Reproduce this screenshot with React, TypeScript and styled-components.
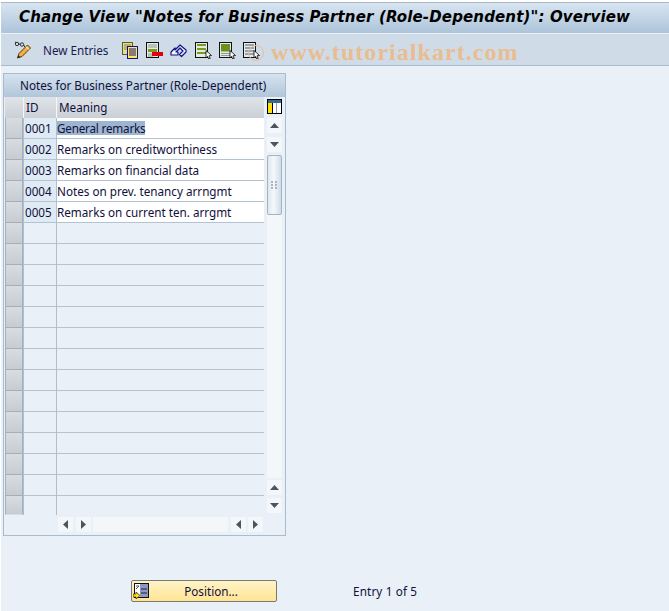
import React from "react";
import styled, { createGlobalStyle } from "styled-components";

const Global = createGlobalStyle`
  html, body { margin: 0; padding: 0; background: #fff; }
  #root { width: 669px; height: 611px; overflow: hidden; }
`;

const Page = styled.div`
  position: relative;
  width: 669px;
  height: 611px;
  box-sizing: border-box;
  padding: 2px 0 0 1px;
  display: flex;
  flex-direction: column;
  background: #fff;
  font-family: "Noto Sans", sans-serif;
  font-size: 11.7px;
  color: #10103a;
`;
const TitleBar = styled.div`
  height: 31px;
  flex: none;
  box-sizing: border-box;
  border-top: 1px solid #a9b9c9;
  padding: 0 0 2px 18px;
  display: flex;
  align-items: center;
  background: linear-gradient(#d8e5f1, #adc4da);
`;
const Title = styled.h1`
  margin: 0;
  font: italic bold 15px "DejaVu Sans", sans-serif;
  letter-spacing: 0.14px;
  color: #000;
  white-space: nowrap;
`;
const Toolbar = styled.div`
  position: relative;
  height: 33px;
  flex: none;
  box-sizing: border-box;
  border-top: 1px solid #e9f0f7;
  border-bottom: 1px solid #a9bacb;
  padding-left: 13px;
  display: flex;
  align-items: center;
  background: #cfdce7;
`;
const ToolIcon = styled.svg<{ $gap?: number }>`
  width: 18px;
  height: 18px;
  flex: none;
  margin-right: ${(p) => p.$gap ?? 6.3}px;
`;
const ToolText = styled.span`
  width: 67px;
  margin: 0 11px 0 11px;
  color: #1a1a50;
  white-space: nowrap;
`;
const Watermark = styled.div`
  position: absolute;
  left: 270px;
  top: 5px;
  font: bold 24px "Liberation Serif", serif;
  letter-spacing: 1.05px;
  color: #e9bd90;
  white-space: nowrap;
`;
const WatermarkRing = styled.div`
  position: absolute;
  left: 247px;
  top: 11px;
  width: 14px;
  height: 14px;
  border: 1px solid #e9bd90;
  border-radius: 50%;
`;
const Main = styled.div`
  flex: 1;
  display: flex;
  flex-direction: column;
  background: #e9f0f7;
  padding: 7px 0 0 2px;
`;
const Panel = styled.section`
  width: 283px;
  height: 463px;
  box-sizing: border-box;
  border: 1px solid #a9bccf;
  display: flex;
  flex-direction: column;
`;
const PanelTitle = styled.div`
  height: 23px;
  flex: none;
  box-sizing: border-box;
  padding: 0 0 0 16px;
  line-height: 23px;
  white-space: nowrap;
  color: #10103a;
  background: linear-gradient(#d6e3ef, #b0c6da);
`;
const TableArea = styled.div`
  display: flex;
  flex: none;
  padding: 0 3px 0 1px;
`;
const Grid = styled.div`
  width: 259px;
  flex: none;
  display: flex;
  flex-direction: column;
`;
const Row = styled.div`
  display: grid;
  grid-template-columns: 18px 1px 32px 1px 207px;
  height: 21px;
  &:last-child {
    height: 19px;
  }
  &:last-child > * {
    border-bottom-color: transparent;
  }
`;
const HeaderRow = styled.div`
  display: grid;
  grid-template-columns: 18px 1px 32px 1px 207px;
  height: 21px;
  background: linear-gradient(#e0e4e8, #c9d0d6);
`;
const HeaderCell = styled.div`
  padding-left: 2px;
  line-height: 21px;
  color: #10103a;
`;
const Selector = styled.div`
  box-sizing: border-box;
  background: linear-gradient(#d8dde2, #c6ccd2);
  border: 1px solid #a5afb9;
  border-width: 0 1px 1px 1px;
`;
const Divider = styled.div`
  background: #aebfce;
`;
const HeaderDivider = styled.div`
  background: #f4f6f8;
`;
const IdCell = styled.div<{ $filled: boolean }>`
  box-sizing: border-box;
  padding-left: 1px;
  display: flex;
  align-items: center;
  background: ${(p) => (p.$filled ? "#dfeaf5" : "transparent")};
  border-bottom: 1px solid #b3c3d2;
  color: #10103a;
`;
const MeaningCell = styled.div<{ $filled: boolean }>`
  box-sizing: border-box;
  display: flex;
  align-items: center;
  background: ${(p) => (p.$filled ? "#fff" : "transparent")};
  border-bottom: 1px solid #b3c3d2;
  color: #10103a;
  white-space: nowrap;
`;
const Selected = styled.span`
  background: #9db5d1;
  height: 14px;
  line-height: 14px;
  letter-spacing: -0.2px;
`;
const RowsBody = styled.div`
  display: flex;
  flex-direction: column;
`;
const VScroll = styled.div`
  width: 15px;
  margin-left: 3px;
  display: flex;
  flex-direction: column;
  align-items: stretch;
`;
const ColumnConfig = styled.svg`
  width: 15px;
  height: 15px;
  margin: 2px 0 4px;
  display: block;
`;
const ScrollButton = styled.button<{ $gap?: number }>`
  width: 15px;
  height: 15px;
  flex: none;
  margin: 0 0 ${(p) => p.$gap ?? 3}px;
  padding: 0;
  border: none;
  background: #f4f7fa;
  display: flex;
  align-items: center;
  justify-content: center;
`;
const HButton = styled(ScrollButton)<{ $right?: number }>`
  margin: 0 ${(p) => p.$right ?? 0}px 0 0;
`;
const Thumb = styled.div`
  width: 15px;
  height: 60px;
  box-sizing: border-box;
  flex: none;
  border: 1px solid #a8b3bd;
  border-radius: 2px;
  background: linear-gradient(90deg, #dfe8f0, #f4f8fb 45%, #cfdce8);
  display: flex;
  align-items: center;
  justify-content: center;
`;
const Track = styled.div`
  width: 15px;
  flex: 1;
  background: #f4f7fa;
  margin-bottom: 2px;
`;
const VTrackBox = styled.div`
  height: 325px;
  display: flex;
  flex-direction: column;
  flex: none;
`;
const HScroll = styled.div`
  display: flex;
  align-items: center;
  height: 15px;
  margin: 2px 0 0 53px;
`;
const HTrack = styled.div`
  width: 135px;
  height: 15px;
  margin-right: 3px;
  background: #f4f7fa;
`;
const Footer = styled.div`
  display: flex;
  align-items: center;
  margin: 44px 0 0 128px;
`;
const PositionButton = styled.button`
  width: 146px;
  height: 22px;
  box-sizing: border-box;
  padding: 0 0 0 1px;
  display: flex;
  align-items: center;
  border: 1px solid #7a7a72;
  border-radius: 2px;
  background: linear-gradient(#fff4c8, #ffe493);
  font: 11.7px "Noto Sans", sans-serif;
  color: #10103a;
`;
const ButtonLabel = styled.span`
  flex: 1;
  text-align: center;
  padding-right: 3px;
`;
const EntryInfo = styled.span`
  margin-left: 76px;
  letter-spacing: 0.15px;
  color: #10103a;
`;

const Up = () => <svg width="9" height="5"><path d="M0 5 L4.5 0 L9 5Z" fill="#4a5560" /></svg>;
const Down = () => <svg width="9" height="5"><path d="M0 0 L4.5 5 L9 0Z" fill="#4a5560" /></svg>;
const Left = () => <svg width="5" height="9"><path d="M5 0 L0 4.5 L5 9Z" fill="#4a5560" /></svg>;
const Right = () => <svg width="5" height="9"><path d="M0 0 L5 4.5 L0 9Z" fill="#4a5560" /></svg>;

const Arrow = () => <path d="M12 9.5 L17.5 14.5 L15 14.8 L16.2 17.5 L14.8 18 L13.6 15.4 L12 17Z" fill="#fff" stroke="#000" strokeWidth="0.8" />;

const Rows = [
  ["0001", "General remarks"],
  ["0002", "Remarks on creditworthiness"],
  ["0003", "Remarks on financial data"],
  ["0004", "Notes on prev. tenancy arrngmt"],
  ["0005", "Remarks on current ten. arrgmt"],
  ...Array.from({ length: 14 }, () => ["", ""]),
];

export default function App() {
  return (
    <Page>
      <Global />
      <TitleBar>
        <Title>Change View "Notes for Business Partner (Role-Dependent)": Overview</Title>
      </TitleBar>
      <Toolbar>
        <ToolIcon viewBox="0 0 18 18" $gap={0}>
          <circle cx="3" cy="3" r="1.7" fill="none" stroke="#333" />
          <circle cx="8" cy="3.5" r="1.7" fill="none" stroke="#333" />
          <path d="M1 1.5 L2 1 M4.6 3 L6.4 3.2 M9.6 4 L11 6" stroke="#222" fill="none" />
          <path d="M13.5 4 L16.5 7 L8 15.5 L3.5 17 L5 12.5Z" fill="#f4b23c" stroke="#54350e" />
          <path d="M3.5 17 L4.4 14.2 L6.3 16.1Z" fill="#222" />
          <path d="M12 5.5 L15 8.5" stroke="#fff" />
        </ToolIcon>
        <ToolText>New Entries</ToolText>
        <ToolIcon viewBox="0 0 18 18">
          <rect x="1.5" y="1.5" width="10" height="12" fill="#e8dd80" stroke="#5a5a40" />
          <path d="M3 4h7M3 6h7M3 8h7" stroke="#8a8a50" />
          <rect x="6.5" y="5.5" width="10" height="12" fill="#ffe860" stroke="#10108a" />
          <path d="M8 8h7M8 10h7M8 12h7M8 14h7" stroke="#10108a" />
        </ToolIcon>
        <ToolIcon viewBox="0 0 18 18">
          <rect x="1.5" y="1.5" width="12" height="15" fill="#e4ebe6" stroke="#111" />
          <path d="M3 4h9M3 6h9M3 13h5M3 15h5" stroke="#8a9a90" />
          <rect x="3" y="8" width="9" height="3" fill="#7a9a20" />
          <rect x="7" y="11" width="11" height="4" fill="#e00010" />
        </ToolIcon>
        <ToolIcon viewBox="0 0 18 18">
          <path d="M1 11 L5 7 L5 9 L10 4 L16 9 A3 3 0 0 1 16 11 L11.5 15.5 L9.5 13.5 L13 10 L10 7 L6 11 L8 11 L8 14 L1 14Z" fill="#f4f7fa" stroke="#10108a" strokeWidth="1.2" strokeLinejoin="round" />
        </ToolIcon>
        <ToolIcon viewBox="0 0 18 18">
          <rect x="1.5" y="1.5" width="12" height="15" fill="#e4ebe6" stroke="#111" />
          <path d="M3 4h9M3 8h9M3 12h9" stroke="#7a9a20" strokeWidth="2.2" />
          <Arrow />
        </ToolIcon>
        <ToolIcon viewBox="0 0 18 18">
          <rect x="1.5" y="1.5" width="12" height="15" fill="#e4ebe6" stroke="#111" />
          <rect x="3" y="3" width="9" height="7.5" fill="#6e8f20" />
          <path d="M3 12.5h9M3 14.5h9" stroke="#8a9a90" />
          <Arrow />
        </ToolIcon>
        <ToolIcon viewBox="0 0 18 18">
          <rect x="1.5" y="1.5" width="12" height="15" fill="#e4eaee" stroke="#111" />
          <path d="M3 4h9M3 7h9M3 10h9M3 13h9" stroke="#7e8a96" strokeWidth="1.4" />
          <Arrow />
        </ToolIcon>
        <WatermarkRing />
        <Watermark>www.tutorialkart.com</Watermark>
      </Toolbar>
      <Main>
        <Panel>
          <PanelTitle>Notes for Business Partner (Role-Dependent)</PanelTitle>
          <TableArea>
            <Grid>
              <HeaderRow>
                <div />
                <HeaderDivider />
                <HeaderCell>ID</HeaderCell>
                <HeaderDivider />
                <HeaderCell>Meaning</HeaderCell>
              </HeaderRow>
              <RowsBody>
                {Rows.map(([id, text], i) => (
                  <Row key={i}>
                    <Selector />
                    <Divider />
                    <IdCell $filled={!!id}>{id}</IdCell>
                    <Divider />
                    <MeaningCell $filled={!!id}>{i === 0 ? <Selected>{text}</Selected> : text}</MeaningCell>
                  </Row>
                ))}
              </RowsBody>
              <HScroll>
                <HButton $right={3}><Left /></HButton>
                <HButton $right={2}><Right /></HButton>
                <HTrack />
                <HButton $right={2}><Left /></HButton>
                <HButton><Right /></HButton>
              </HScroll>
            </Grid>
            <VScroll>
              <ColumnConfig viewBox="0 0 15 15">
                <rect x="0.5" y="0.5" width="14" height="14" fill="#fff" stroke="#000" />
                <rect x="1" y="1" width="13" height="3" fill="#2e6f90" />
                <rect x="1" y="4" width="4" height="10" fill="#ffe000" />
                <rect x="5" y="4" width="1" height="10" fill="#000" />
                <rect x="9" y="4" width="1" height="10" fill="#8aa0b4" />
              </ColumnConfig>
              <ScrollButton $gap={4}><Up /></ScrollButton>
              <ScrollButton><Down /></ScrollButton>
              <VTrackBox>
                <Thumb>
                  <svg width="7" height="9" fill="#aab6c2"><path d="M0 0h2v2H0zM4 0h2v2H4zM0 3h2v2H0zM4 3h2v2H4zM0 6h2v2H0zM4 6h2v2H4z" /></svg>
                </Thumb>
                <Track />
              </VTrackBox>
              <ScrollButton><Up /></ScrollButton>
              <ScrollButton><Down /></ScrollButton>
            </VScroll>
          </TableArea>
        </Panel>
        <Footer>
          <PositionButton>
            <svg width="16" height="16" viewBox="0 0 16 16">
              <rect x="1.5" y="0.5" width="14" height="14" fill="#fff" stroke="#111" />
              <rect x="7" y="1" width="8" height="13" fill="#8d96c4" />
              <path d="M8 6h6M8 10h6" stroke="#222" />
              <path d="M3 3h3M3 6l3-3" stroke="#555" fill="none" />
              <path d="M0 11h3V9l4 3.5L3 16v-2H0z" fill="#ffe000" stroke="#222" strokeWidth="0.7" />
            </svg>
            <ButtonLabel>Position...</ButtonLabel>
          </PositionButton>
          <EntryInfo>Entry 1 of 5</EntryInfo>
        </Footer>
      </Main>
    </Page>
  );
}
